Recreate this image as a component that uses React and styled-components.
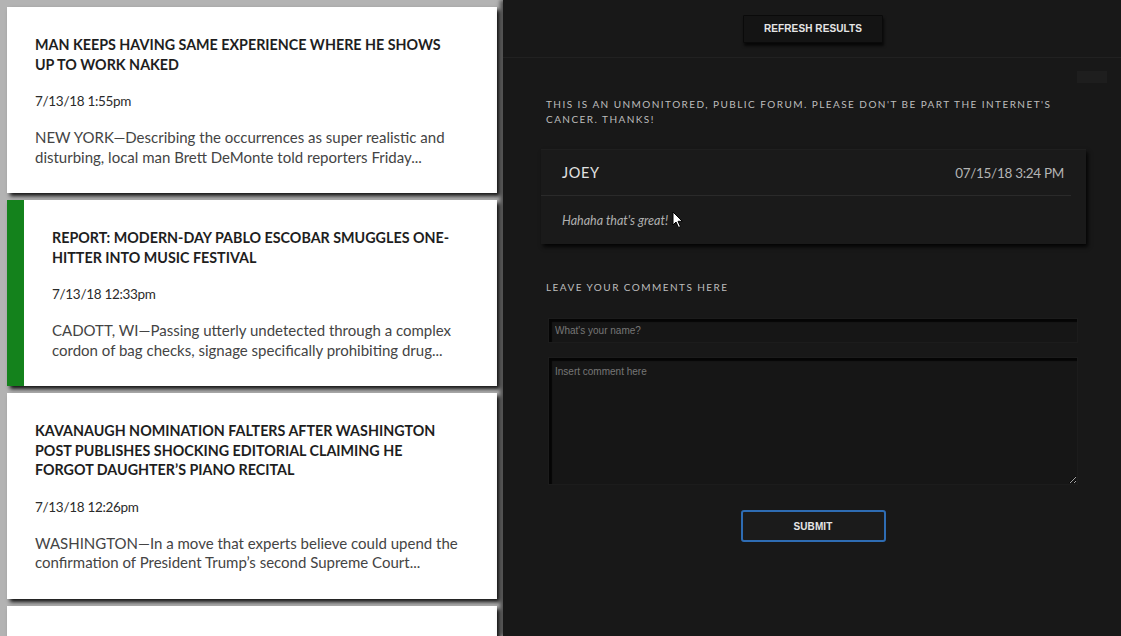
import React from "react";
import styled, { createGlobalStyle } from "styled-components";

const Global = createGlobalStyle`
  html, body { margin: 0; padding: 0; height: 100%; overflow: hidden; }
  body { background: #181818; }
  * { box-sizing: border-box; }
`;

const Page = styled.div`
  display: flex;
  width: 1121px;
  height: 636px;
  overflow: hidden;
`;

const Feed = styled.div`
  width: 503px;
  flex: none;
  background: #b3b3b3;
  padding: 7px 6px 0 7px;
  display: flex;
  flex-direction: column;
  gap: 7px;
  overflow: hidden;
`;

const Card = styled.article`
  flex: none;
  width: 490px;
  background: #fff;
  display: flex;
  box-shadow: 3px 3px 4px rgba(0, 0, 0, 0.9);
  min-height: ${(p) => p.$min || 0}px;
`;

const Accent = styled.div`
  width: 17px;
  flex: none;
  background: #14821c;
`;

const CardBody = styled.div`
  flex: 1;
  padding: 28px 36px 26px 28px;
  font-family: Lato, "Noto Sans", sans-serif;
`;

const Headline = styled.h2`
  margin: 0;
  font-size: 14.3px;
  line-height: 19.5px;
  font-weight: 700;
  color: #1e1e1e;
  text-transform: uppercase;
`;

const DateLine = styled.div`
  margin-top: 17px;
  font-size: 13.5px;
  line-height: 20px;
  letter-spacing: -0.3px;
  color: #2b2b2b;
`;

const Teaser = styled.p`
  margin: 17px -10px 0 0;
  font-size: 15px;
  line-height: 19.5px;
  color: #444;
`;

const Forum = styled.section`
  flex: 1;
  min-width: 0;
  background: #181818;
  display: flex;
  flex-direction: column;
  position: relative;
  box-shadow: -3px 0 4px rgba(0, 0, 0, 0.55);
`;

const TopBar = styled.header`
  height: 58px;
  flex: none;
  display: flex;
  align-items: center;
  justify-content: center;
  border-bottom: 1px solid #212121;
  padding-left: 2px;
`;

const DarkButton = styled.button`
  width: ${(p) => p.$w}px;
  height: ${(p) => p.$h}px;
  background: ${(p) => (p.$focus ? "#1b1b1b" : "#141414")};
  border: ${(p) => (p.$focus ? "2px solid #2e6cb3" : "1px solid #0a0a0a")};
  border-radius: ${(p) => (p.$focus ? 3 : 1)}px;
  box-shadow: ${(p) => (p.$focus ? "none" : "1px 3px 3px rgba(0,0,0,0.7)")};
  color: #e6e6e6;
  font-family: "Liberation Sans", Arial, sans-serif;
  font-weight: 700;
  font-size: 10px;
  letter-spacing: 0.1px;
  text-transform: uppercase;
  cursor: pointer;
`;

const Content = styled.div`
  display: flex;
  flex-direction: column;
  padding: 13px 14px 0 43px;
`;

const StubRow = styled.div`
  display: flex;
  justify-content: flex-end;
`;

const Stub = styled.div`
  width: 30px;
  height: 12px;
  background: #1e1e1e;
`;

const SmallCaps = styled.p`
  margin: ${(p) => p.$mt}px 0 0;
  max-width: 540px;
  font-family: Lato, "Noto Sans", sans-serif;
  font-size: 10px;
  line-height: 15px;
  letter-spacing: 1.45px;
  color: #bdbdbd;
  text-transform: uppercase;
`;

const Comment = styled.div`
  margin: 22px 21px 0 -5px;
  background: #1a1a1a;
  border-top: 1px solid #1f1f1f;
  box-shadow: 2px 3px 4px rgba(0, 0, 0, 0.85);
  font-family: Lato, "Noto Sans", sans-serif;
`;

const CommentHead = styled.div`
  height: 46px;
  margin-right: 15px;
  padding: 0 7px 0 21px;
  display: flex;
  align-items: center;
  justify-content: space-between;
  border-bottom: 1px solid #2a2a2a;
`;

const Author = styled.span`
  font-size: 14.5px;
  letter-spacing: 0.6px;
  color: #e2e2e2;
`;

const Stamp = styled.span`
  font-size: 13.5px;
  letter-spacing: -0.3px;
  color: #b4b4b4;
`;

const CommentText = styled.div`
  position: relative;
  height: 48px;
  padding-left: 21px;
  display: flex;
  align-items: center;
  font-size: 12.5px;
  font-style: italic;
  color: #b0b0b0;
`;

const Pointer = styled.svg`
  position: absolute;
  left: 131px;
  top: 15px;
`;

const Form = styled.form`
  display: flex;
  flex-direction: column;
  margin-right: 29px;
`;

const Field = styled.input`
  margin: 23px 0 0 2px;
  height: 25px;
  background: #161616;
  border: 1px solid #1c1c1c;
  box-shadow: inset 3px 3px 1px rgba(0, 0, 0, 0.75);
  color: #ccc;
  padding: 0 6px;
  font-family: "Liberation Sans", Arial, sans-serif;
  font-size: 10px;
  outline: none;
  &::placeholder { color: #777; }
`;

const Area = styled.textarea`
  margin: 14px 0 0 2px;
  height: 128px;
  background: #161616;
  border: 1px solid #1c1c1c;
  box-shadow: inset 3px 3px 1px rgba(0, 0, 0, 0.75);
  color: #ccc;
  padding: 8px 6px;
  font-family: "Liberation Sans", Arial, sans-serif;
  font-size: 10px;
  outline: none;
  resize: vertical;
  &::placeholder { color: #777; }
`;

const SubmitRow = styled.div`
  display: flex;
  justify-content: center;
  margin-top: 25px;
  padding-left: 2px;
`;

const stories = [
  {
    title: "Man Keeps Having Same Experience Where He Shows Up To Work Naked",
    date: "7/13/18 1:55pm",
    text: "NEW YORK—Describing the occurrences as super realistic and disturbing, local man Brett DeMonte told reporters Friday...",
  },
  {
    title: "Report: Modern-Day Pablo Escobar Smuggles One-Hitter Into Music Festival",
    date: "7/13/18 12:33pm",
    text: "CADOTT, WI—Passing utterly undetected through a complex cordon of bag checks, signage specifically prohibiting drug...",
    active: true,
  },
  {
    title: "Kavanaugh Nomination Falters After Washington Post Publishes Shocking Editorial Claiming He Forgot Daughter’s Piano Recital",
    date: "7/13/18 12:26pm",
    text: "WASHINGTON—In a move that experts believe could upend the confirmation of President Trump’s second Supreme Court...",
  },
];

export default function App() {
  return (
    <Page>
      <Global />
      <Feed>
        {stories.map((s) => (
          <Card key={s.date}>
            {s.active && <Accent />}
            <CardBody>
              <Headline>{s.title}</Headline>
              <DateLine>{s.date}</DateLine>
              <Teaser>{s.text}</Teaser>
            </CardBody>
          </Card>
        ))}
        <Card $min={60} />
      </Feed>
      <Forum>
        <TopBar>
          <DarkButton $w={140} $h={28} type="button">Refresh Results</DarkButton>
        </TopBar>
        <Content>
          <StubRow>
            <Stub />
          </StubRow>
          <SmallCaps $mt={14}>
            This is an unmonitored, public forum. Please don't be part the internet's cancer. Thanks!
          </SmallCaps>
          <Comment>
            <CommentHead>
              <Author>JOEY</Author>
              <Stamp>07/15/18 3:24 PM</Stamp>
            </CommentHead>
            <CommentText>
              Hahaha that's great!
              <Pointer width="12" height="18" viewBox="0 0 12 18">
                <path d="M1 1 L1 14 L4 11 L6.5 16.5 L8.5 15.6 L6 10.3 L10.3 10.3 Z" fill="#fff" stroke="#000" strokeWidth="1" />
              </Pointer>
            </CommentText>
          </Comment>
          <Form onSubmit={(e) => e.preventDefault()}>
            <SmallCaps $mt={36}>Leave your comments here</SmallCaps>
            <Field placeholder="What's your name?" />
            <Area placeholder="Insert comment here" />
            <SubmitRow>
              <DarkButton $w={145} $h={32} $focus type="submit">Submit</DarkButton>
            </SubmitRow>
          </Form>
        </Content>
      </Forum>
    </Page>
  );
}
